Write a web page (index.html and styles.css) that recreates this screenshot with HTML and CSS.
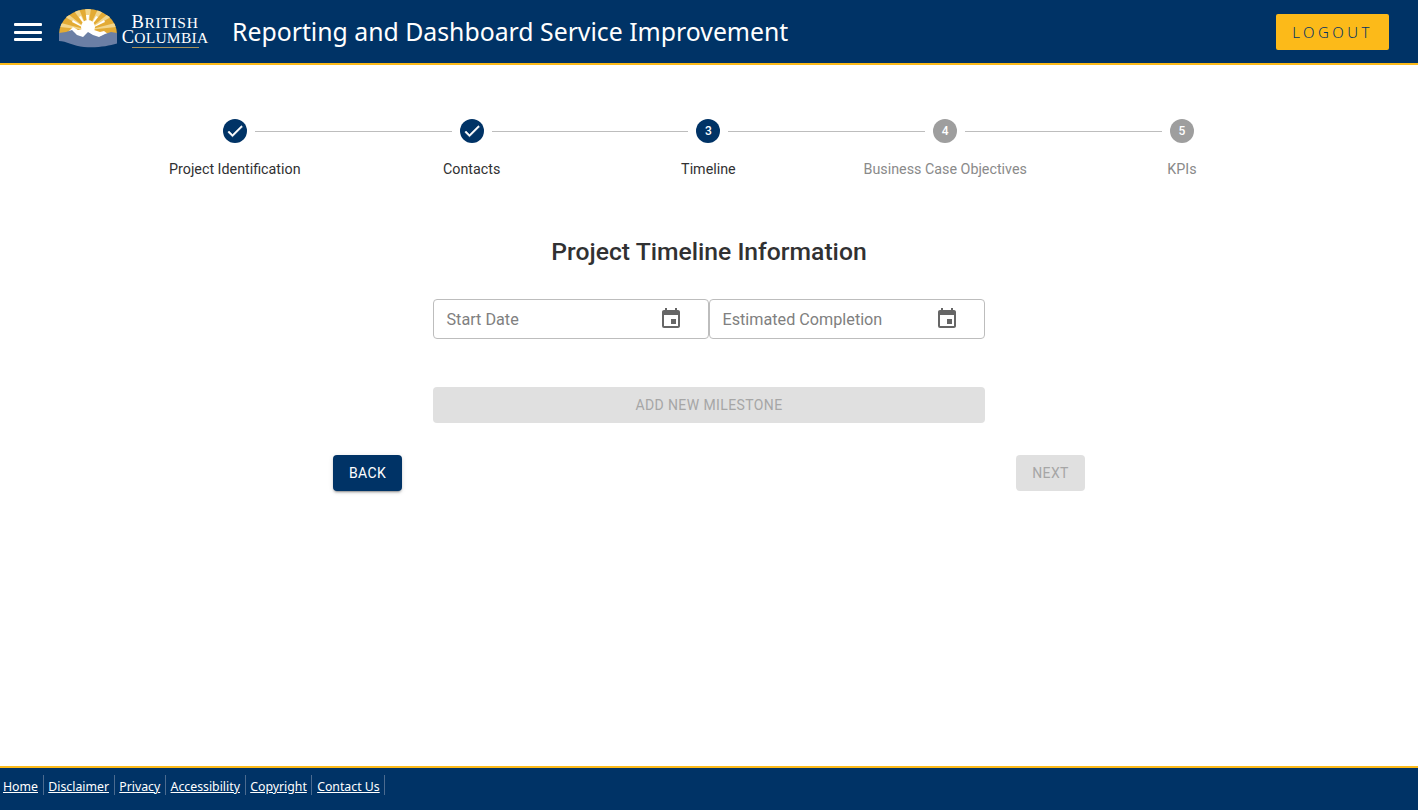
FILE: index.html
```html
<!DOCTYPE html>
<html lang="en">
<head>
<meta charset="utf-8">
<title>Reporting and Dashboard Service Improvement</title>
<link rel="stylesheet" href="styles.css">
</head>
<body>
<header class="topbar">
  <button class="menu" aria-label="Menu"><span></span><span></span><span></span></button>
  <div class="logo">
    <svg class="logo-mark" viewBox="0 0 60 40" width="60" height="40" aria-hidden="true">
      <defs><clipPath id="sun"><path d="M1 26a29 25 0 0 1 58 0V30H1Z"/></clipPath></defs>
      <g clip-path="url(#sun)">
        <rect width="60" height="30" fill="#e3ab35"/>
        <g fill="#f3d68c">
          <path d="M30 22 27 0h6Z"/><path d="M30 22 16 3l5-2Z"/><path d="M30 22 40 1l5 2Z"/>
          <path d="M30 22 7 9l3-3Z"/><path d="M30 22 50 6l3 3Z"/><path d="M30 22 2 19l1-4Z"/><path d="M30 22 57 15l1 4Z"/>
        </g>
        <g fill="#fff">
          <path d="M30 22 28 7h3Z"/><path d="M30 22 21 9l2-1Z"/><path d="M30 22 38 8l2 1Z"/><path d="M30 22 14 14l1-2Z"/><path d="M30 22 46 12l1 2Z"/>
          <circle cx="30" cy="19" r="7"/>
        </g>
      </g>
      <path d="M9 25 15 19 20 22 25 21 30 18 36 22 42 24 46 23 50 26 30 33Z" fill="#fff"/>
      <path d="M1 25 8 24 14 22 19 27 25 29 30 24 35 27 41 29 47 26 53 24 59 25V35.5C50 38 40 40 26 39 16 38 8 33 1 33Z" fill="#6b7fa5"/>
    </svg>
    <div class="wordmark">
      <span class="wm-line wm-british"><span class="wm-cap">B</span>RITISH</span>
      <span class="wm-line wm-columbia"><span class="wm-cap">C</span>OLUMBIA</span>
      <span class="wm-rule"></span>
    </div>
  </div>
  <h1 class="app-title">Reporting and Dashboard Service Improvement</h1>
  <button class="logout">LOGOUT</button>
</header>

<main class="page">
  <ol class="stepper">
    <li class="step done">
      <div class="step-head"><span class="line none"></span><span class="badge"><svg viewBox="0 0 24 24" width="20" height="20"><path d="M9 16.17 4.83 12l-1.42 1.41L9 19 21 7l-1.41-1.41z" fill="#fff" stroke="#fff" stroke-width=".6"/></svg></span><span class="line"></span></div>
      <span class="step-label">Project Identification</span>
    </li>
    <li class="step done">
      <div class="step-head"><span class="line"></span><span class="badge"><svg viewBox="0 0 24 24" width="20" height="20"><path d="M9 16.17 4.83 12l-1.42 1.41L9 19 21 7l-1.41-1.41z" fill="#fff" stroke="#fff" stroke-width=".6"/></svg></span><span class="line"></span></div>
      <span class="step-label">Contacts</span>
    </li>
    <li class="step active">
      <div class="step-head"><span class="line"></span><span class="badge">3</span><span class="line"></span></div>
      <span class="step-label">Timeline</span>
    </li>
    <li class="step todo">
      <div class="step-head"><span class="line"></span><span class="badge">4</span><span class="line"></span></div>
      <span class="step-label">Business Case Objectives</span>
    </li>
    <li class="step todo">
      <div class="step-head"><span class="line"></span><span class="badge">5</span><span class="line none"></span></div>
      <span class="step-label">KPIs</span>
    </li>
  </ol>

  <h2 class="form-title">Project Timeline Information</h2>

  <div class="form-col">
    <div class="dates">
      <label class="date-field"><span class="placeholder">Start Date</span>
        <svg class="cal" viewBox="0 0 24 24" width="24" height="24"><path d="M17 12h-5v5h5v-5zM16 1v2H8V1H6v2H5c-1.11 0-1.99.9-1.99 2L3 19a2 2 0 0 0 2 2h14c1.1 0 2-.9 2-2V5c0-1.1-.9-2-2-2h-1V1h-2zm3 18H5V8h14v11z" fill="#666"/></svg>
      </label>
      <label class="date-field"><span class="placeholder">Estimated Completion</span>
        <svg class="cal" viewBox="0 0 24 24" width="24" height="24"><path d="M17 12h-5v5h5v-5zM16 1v2H8V1H6v2H5c-1.11 0-1.99.9-1.99 2L3 19a2 2 0 0 0 2 2h14c1.1 0 2-.9 2-2V5c0-1.1-.9-2-2-2h-1V1h-2zm3 18H5V8h14v11z" fill="#666"/></svg>
      </label>
    </div>
    <button class="btn add" disabled>ADD NEW MILESTONE</button>
  </div>

  <div class="nav-row">
    <button class="btn back">BACK</button>
    <button class="btn next" disabled>NEXT</button>
  </div>
</main>

<footer class="footer">
  <a href="#">Home</a><a href="#">Disclaimer</a><a href="#">Privacy</a><a href="#">Accessibility</a><a href="#">Copyright</a><a href="#">Contact Us</a>
</footer>
</body>
</html>
```
FILE: styles.css
```css
* { box-sizing: border-box; }
html, body { height: 100%; }
body {
  margin: 0;
  display: flex;
  flex-direction: column;
  min-height: 100vh;
  overflow: hidden;
  background: #fff;
  font-family: Roboto, "Liberation Sans", sans-serif;
  color: #313132;
}
button { font-family: inherit; border: 0; }

.topbar {
  height: 65px;
  flex: none;
  display: flex;
  align-items: center;
  background: #003366;
  border-bottom: 2px solid #fcba19;
  padding: 0 29px 0 14px;
}
.menu {
  width: 28px;
  height: 18px;
  margin-top: 1px;
  padding: 0;
  background: none;
  display: flex;
  flex-direction: column;
  justify-content: space-between;
  flex: none;
}
.menu span { display: block; height: 3px; background: #fff; border-radius: 1px; }
.logo { display: flex; align-items: flex-start; margin-left: 16px; height: 63px; flex: none; }
.logo-mark { margin-top: 8px; flex: none; }
.wordmark {
  display: flex;
  flex-direction: column;
  align-items: center;
  width: 88px;
  margin: 15px 0 0 3px;
  font-family: "Liberation Serif", serif;
  color: #fff;
}
.wm-line { font-size: 15.5px; line-height: 15px; white-space: nowrap; }
.wm-british { letter-spacing: .7px; }
.wm-columbia { letter-spacing: .25px; }
.wm-cap { font-size: 18.5px; }
.wm-rule { width: 67px; height: 1px; margin-top: 2px; background: #a8925a; }
.app-title {
  margin: 0 0 2px 23px;
  font-family: "Noto Sans", sans-serif;
  font-size: 24.8px;
  font-weight: 400;
  color: #fff;
  white-space: nowrap;
}
.logout {
  margin-left: auto;
  width: 113px;
  height: 36px;
  background: #fcba19;
  color: #003366;
  border-radius: 2px;
  font-family: "Noto Sans", sans-serif;
  font-size: 15px;
  font-weight: 300;
  letter-spacing: 3.4px;
  padding: 0;
}

.page { flex: 1; display: flex; flex-direction: column; align-items: center; min-height: 0; }
.stepper {
  list-style: none;
  margin: 54px 1.2px 0 0;
  padding: 0;
  width: 1184px;
  display: grid;
  grid-template-columns: repeat(5, 1fr);
}
.step { display: flex; flex-direction: column; align-items: center; }
.step-head { display: flex; align-items: center; width: 100%; height: 24px; }
.line { flex: 1; height: 1px; background: #bdbdbd; }
.line.none { background: transparent; }
.badge {
  width: 24px;
  height: 24px;
  margin: 0 8px;
  flex: none;
  border-radius: 50%;
  display: flex;
  align-items: center;
  justify-content: center;
  color: #fff;
  font-size: 12px;
  font-weight: 500;
  background: #003366;
}
.todo .badge { background: #9e9e9e; }
.step-label { margin-top: 18px; font-size: 14.3px; line-height: 16px; color: #313132; white-space: nowrap; }
.todo .step-label { color: #8a8a8a; }

.form-title { margin: 59px 0 0; font-size: 24.7px; line-height: 32px; font-weight: 500; color: #313132; }
.form-col { width: 552px; margin-top: 31px; display: flex; flex-direction: column; }
.dates { display: flex; }
.date-field {
  flex: 1;
  height: 40px;
  display: flex;
  align-items: center;
  justify-content: space-between;
  padding: 0 25px 0 12.5px;
  border: 1px solid #bdbdbd;
  border-radius: 4px;
  background: #fff;
}
.placeholder { font-size: 16.2px; color: #808080; }
.cal { flex: none; margin-right: 0; }

.btn {
  height: 36px;
  border-radius: 4px;
  font-size: 14px;
  font-weight: 450;
  letter-spacing: .4px;
  padding: 0 16px;
}
.btn:disabled { background: #e0e0e0; color: #a6a6a6; font-weight: 400; }
.add { margin-top: 48px; width: 100%; }
.nav-row { width: 752px; margin-top: 32px; display: flex; justify-content: space-between; }
.back {
  background: #003366;
  color: #fff;
  width: 69px;
  box-shadow: 0 3px 1px -2px rgba(0,0,0,.2), 0 2px 2px 0 rgba(0,0,0,.14), 0 1px 5px 0 rgba(0,0,0,.12);
}
.next { width: 69px; }

.footer {
  height: 44px;
  flex: none;
  display: flex;
  align-items: flex-start;
  padding-top: 7px;
  background: #003366;
  border-top: 2px solid #fcba19;
}
.footer a {
  font-family: "Noto Sans", sans-serif;
  font-size: 12.3px;
  line-height: 23px;
  height: 20px;
  color: #fff;
  padding: 0 4.65px;
  border-right: 1px solid #4b6b8f;
}
.footer a:first-child { padding-left: 3px; }
```
